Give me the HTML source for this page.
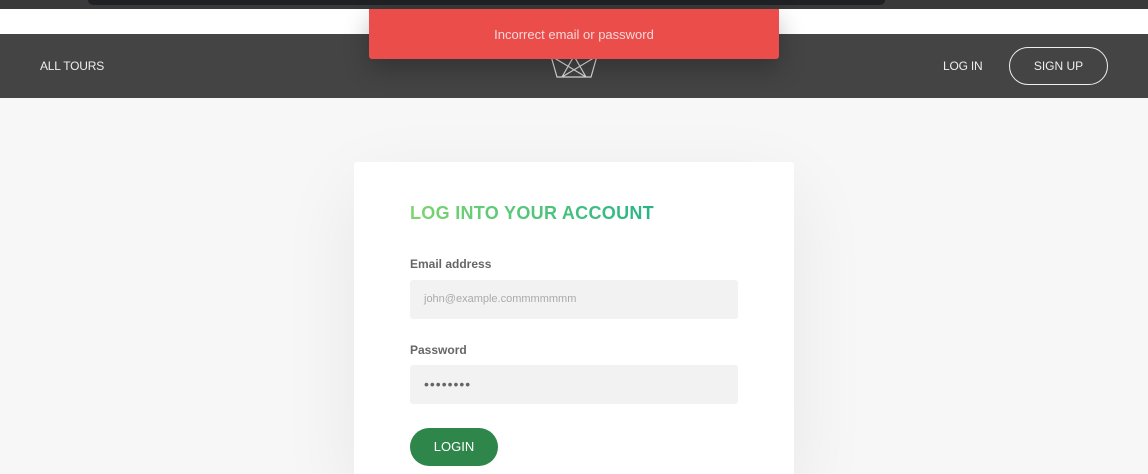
<!DOCTYPE html>
<html style="overflow:hidden;height:474px"><head><style>
body{margin:0;width:1148px;height:474px;overflow:hidden;background:#f7f7f7;font-family:"Liberation Sans",sans-serif;position:relative}
.top{position:absolute;left:0;top:0;width:1148px;height:9px;background:#3a3a3a}
.top .in{position:absolute;left:88px;top:0;width:797px;height:5px;background:#202124;border-radius:0 0 8px 8px}
.white{position:absolute;top:9px;left:0;width:1148px;height:25px;background:#fff}
.hdr{position:absolute;top:34px;left:0;width:1148px;height:64px;background:#444}
.nav{position:absolute;color:#eee;font-size:12px;top:59px;letter-spacing:-.2px}
.su{position:absolute;left:1009px;top:47px;width:99px;height:38px;border:1px solid #eee;border-radius:20px;box-sizing:border-box;color:#eee;font-size:12px;text-align:center;line-height:36px}
.alert{position:absolute;left:369px;top:9px;width:410px;height:50px;background:#eb4d4b;color:#f8d8d8;font-size:13px;text-align:center;line-height:52px;border-radius:0 0 3px 3px;box-shadow:0 10px 25px rgba(0,0,0,.25)}
.card{position:absolute;left:354px;top:162px;width:440px;height:312px;background:#fff;border-radius:3px 3px 0 0;box-shadow:0 25px 80px rgba(0,0,0,.07)}
h2{position:absolute;left:56px;top:41px;margin:0;font-size:18px;font-weight:bold;letter-spacing:.3px;background:linear-gradient(90deg,#7dd56f,#28b487);-webkit-background-clip:text;color:transparent}
.lbl{position:absolute;left:56px;font-size:12px;font-weight:bold;color:#666}
.inp{position:absolute;left:56px;width:328px;height:39px;background:#f2f2f2;border-radius:3px;font-size:11px;color:#aaa;line-height:39px;text-indent:14px}
.btn{position:absolute;left:56px;top:266px;width:88px;height:38px;border-radius:20px;background:#2e864b;color:#fff;font-size:13px;text-align:center;line-height:38px}
</style></head><body>
<div class="top"><div class="in"></div></div>
<div class="white"></div>
<div class="hdr"></div>
<div class="nav" style="left:40px">ALL TOURS</div>
<svg style="position:absolute;left:550px;top:56px" width="48" height="22" viewBox="0 0 48 22"><g fill="none" stroke="#ddd" stroke-width="1.2"><path d="M1 0L7 21H41L47 0M1 0L36 21M47 0L12 21M12 21L24 0L36 21"/></g></svg>
<div class="nav" style="left:943px">LOG IN</div>
<div class="su">SIGN UP</div>
<div class="alert">Incorrect email or password</div>
<div class="card">
<h2>LOG INTO YOUR ACCOUNT</h2>
<div class="lbl" style="top:95px">Email address</div>
<div class="inp" style="top:118px">john@example.commmmmmm</div>
<div class="lbl" style="top:181px">Password</div>
<div class="inp" style="top:203px;color:#666;letter-spacing:1px;font-size:14px">••••••••</div>
<div class="btn">LOGIN</div>
</div>
</body></html>
